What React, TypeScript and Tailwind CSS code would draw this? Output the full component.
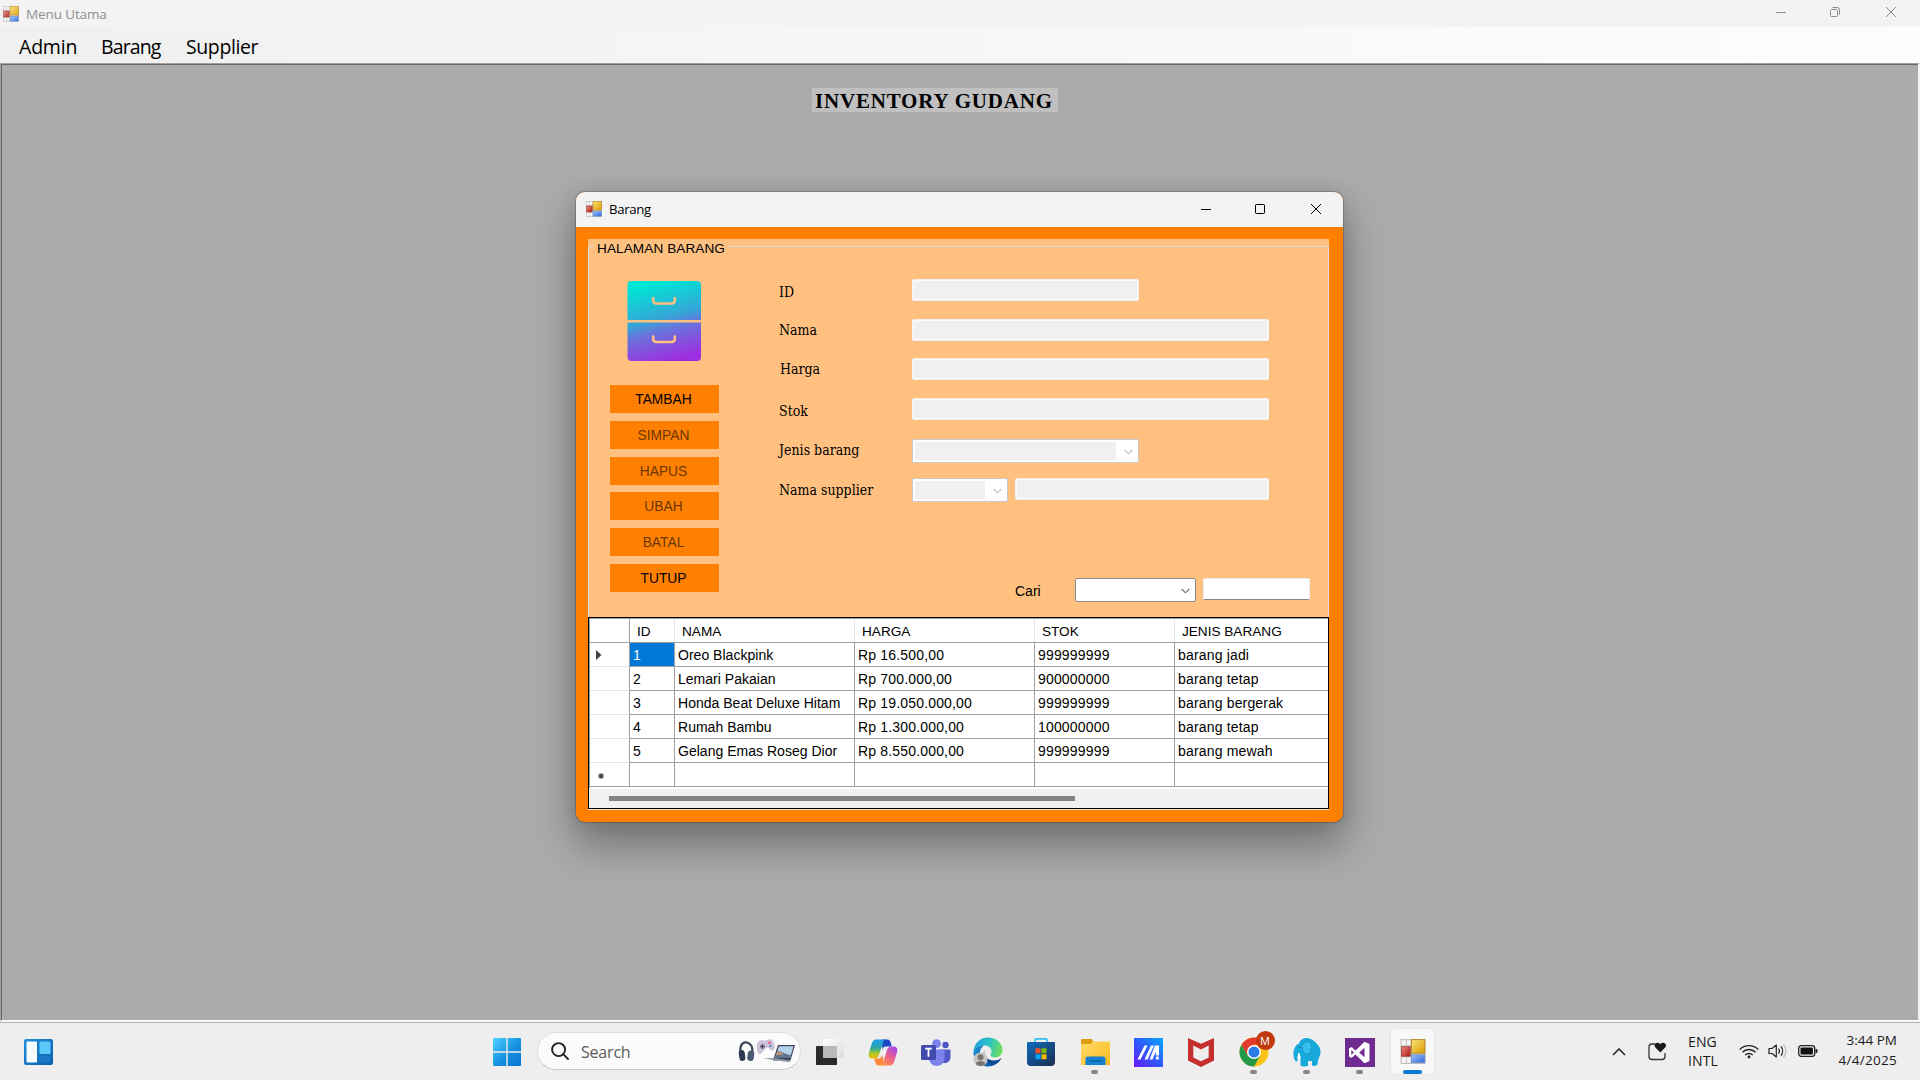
import React from "react";

const SEGOE = "font-['Open_Sans','Noto_Sans',sans-serif]";
const ARIAL = "font-['Liberation_Sans',Arial,sans-serif]";

function FormsIcon({ className, faded }: { className: string; faded?: boolean }) {
  return (
    <svg viewBox="0 0 16 16" className={className} opacity={faded ? 0.9 : 1}>
      <defs>
        <linearGradient id="fy" x1="0" y1="0" x2="1" y2="1">
          <stop offset="0" stopColor="#fbe27a" />
          <stop offset="1" stopColor="#dd9c00" />
        </linearGradient>
        <linearGradient id="fr" x1="0" y1="0" x2="1" y2="1">
          <stop offset="0" stopColor="#ee8a7c" />
          <stop offset="1" stopColor="#a81a12" />
        </linearGradient>
        <linearGradient id="fb" x1="0" y1="0" x2="1" y2="1">
          <stop offset="0" stopColor="#9cc2ff" />
          <stop offset="1" stopColor="#2f68d8" />
        </linearGradient>
      </defs>
      <rect width="16" height="16" fill="#c3c3c3" />
      <rect x=".8" y=".8" width="2.6" height="3.2" fill="#f6f6f6" />
      <rect x="4" y=".8" width="2.4" height="3.2" fill="#f6f6f6" />
      <rect x=".8" y="11.8" width="2.6" height="3.4" fill="#f6f6f6" />
      <rect x="4" y="11.8" width="2.4" height="3.4" fill="#f6f6f6" />
      <rect x="7" y=".4" width="8.6" height="8.6" fill="url(#fy)" stroke="#b98a1c" strokeWidth=".6" />
      <rect x=".6" y="5" width="5.6" height="6" fill="url(#fr)" stroke="#a33a30" strokeWidth=".5" />
      <rect x="7" y="10.2" width="8.6" height="5" fill="url(#fb)" stroke="#6d8fc9" strokeWidth=".5" />
    </svg>
  );
}

function CabinetIcon() {
  return (
    <svg viewBox="0 0 74 80" className="block h-[80px] w-[74px]">
      <defs>
        <linearGradient id="cab" gradientUnits="userSpaceOnUse" x1="28" y1="2" x2="48" y2="78">
          <stop offset="0" stopColor="#00e5d4" />
          <stop offset=".45" stopColor="#35a6d8" />
          <stop offset=".62" stopColor="#6a72dc" />
          <stop offset="1" stopColor="#9e2fe0" />
        </linearGradient>
      </defs>
      <path d="M0.500 39V4a4 4 0 0 1 4-4h65.500a4 4 0 0 1 4 4v35z" fill="url(#cab)" />
      <path d="M0.500 41.500H74V76a4 4 0 0 1-4 4H4.500a4 4 0 0 1-4-4z" fill="url(#cab)" />
      <path d="M26.200 17v2.500a3 3 0 0 0 3 3h15.600a3 3 0 0 0 3-3V17M26.200 55.500V58a3 3 0 0 0 3 3h15.600a3 3 0 0 0 3-3v-2.500" fill="none" stroke="#ffc080" strokeWidth="2.600" strokeLinecap="round" />
    </svg>
  );
}

function Chevron({ color }: { color: string }) {
  return (
    <svg viewBox="0 0 9 6" className="h-[6px] w-[9px]">
      <path d="M.7 1l3.800 3.800L8.300 1" fill="none" stroke={color} strokeWidth="1.100" />
    </svg>
  );
}

const DisabledInput = ({ className }: { className: string }) => (
  <div className={`h-[22px] rounded-[2px] border border-[#f2f0ee] bg-[#f0f0f0] shadow-[inset_0_0_0_1px_#fcfcfc] ${className}`} />
);

const DisabledCombo = ({ className }: { className: string }) => (
  <div className={`flex h-6 items-center rounded-[2px] border border-[#c8c8c8] bg-white pl-[2px] ${className}`}>
    <div className="h-[18px] flex-1 bg-[#f0f0f0]" />
    <div className="flex w-[22px] justify-center pl-[3px] pt-[1px]">
      <Chevron color="#bdbdbd" />
    </div>
  </div>
);

const buttons = [
  { t: "TAMBAH", on: true, mt: "" },
  { t: "SIMPAN", on: false, mt: "mt-2" },
  { t: "HAPUS", on: false, mt: "mt-2" },
  { t: "UBAH", on: false, mt: "mt-[7px]" },
  { t: "BATAL", on: false, mt: "mt-2" },
  { t: "TUTUP", on: true, mt: "mt-2" },
];

const fields: { label: string; h: string; pad: string; control: React.ReactNode }[] = [
  { label: "ID", h: "h-10", pad: "pt-[3px]", control: <DisabledInput className="w-[227px]" /> },
  { label: "Nama", h: "h-[39px]", pad: "pt-[1px]", control: <DisabledInput className="w-[357px]" /> },
  { label: "Harga", h: "h-10", pad: "pt-[1px] pl-px", control: <DisabledInput className="w-[357px]" /> },
  { label: "Stok", h: "h-[41px]", pad: "pt-[3px]", control: <DisabledInput className="w-[357px]" /> },
  { label: "Jenis barang", h: "h-[39px]", pad: "pt-[1px]", control: <DisabledCombo className="w-[227px]" /> },
  {
    label: "Nama supplier",
    h: "h-[24px]",
    pad: "pt-[2px]",
    control: (
      <div className="flex gap-[7px]">
        <DisabledCombo className="w-[96px]" />
        <DisabledInput className="w-[254px]" />
      </div>
    ),
  },
];

const rows = [
  ["1", "Oreo Blackpink", "Rp 16.500,00", "999999999", "barang jadi"],
  ["2", "Lemari Pakaian", "Rp 700.000,00", "900000000", "barang tetap"],
  ["3", "Honda Beat Deluxe Hitam", "Rp 19.050.000,00", "999999999", "barang bergerak"],
  ["4", "Rumah Bambu", "Rp 1.300.000,00", "100000000", "barang tetap"],
  ["5", "Gelang Emas Roseg Dior", "Rp 8.550.000,00", "999999999", "barang mewah"],
  ["", "", "", "", ""],
];

function DataGrid() {
  return (
    <div className="h-[192px] w-[741px] border border-black bg-white">
      <div className="h-[170px] border-l border-t border-[#a0a0a0]">
        <div className="grid h-6 grid-cols-[40px_45px_180px_180px_140px_1fr] border-b border-[#a0a0a0] text-[13.6px] leading-[21px]">
          <div className="border-r border-[#a0a0a0]" />
          {["ID", "NAMA", "HARGA", "STOK", "JENIS BARANG"].map((h, i) => (
            <div key={h} className={`pl-[7px] pt-[2px] ${i < 4 ? "border-r border-[#e5e5e5]" : ""}`}>
              {h}
            </div>
          ))}
        </div>
        {rows.map((r, i) => (
          <div key={i} className="grid h-6 grid-cols-[40px_45px_180px_180px_140px_1fr] text-[14px] leading-[21px]">
            <div className={`flex items-center border-r border-b border-r-[#a0a0a0] pl-[6px] ${i === 5 ? "border-b-[#a0a0a0]" : "border-b-[#e5e5e5]"}`}>
              {i === 0 && (
                <svg viewBox="0 0 6 10" className="h-[10px] w-[6px]">
                  <path d="M0 0l5.500 5L0 10z" fill="#404040" />
                </svg>
              )}
              {i === 5 && (
                <svg viewBox="0 0 6 6" className="ml-[2px] mt-[2px] h-[6px] w-[6px]">
                  <path d="M3 0v6M0 3h6M.8.8l4.400 4.400M5.200.8L.8 5.200" stroke="#404040" strokeWidth="1.100" />
                </svg>
              )}
            </div>
            {r.map((c, j) => (
              <div
                key={j}
                className={`border-b border-[#a0a0a0] pt-[2px] pl-[3px] whitespace-nowrap ${j > 1 ? "tracking-[0.17px]" : "tracking-[0.02px]"} ${j < 4 ? "border-r" : ""} ${i === 0 && j === 0 ? "bg-[#0078d7] text-white" : ""}`}
              >
                {c}
              </div>
            ))}
          </div>
        ))}
      </div>
      <div className="mt-[1px] flex h-[19px] items-center bg-[#f0f0f0] pl-[20px]">
        <div className="mt-[-1px] h-[5px] w-[466px] bg-[#858585]" />
      </div>
    </div>
  );
}

function BarangWindow() {
  return (
    <div className="absolute left-[576px] top-[192px] flex h-[630px] w-[767px] flex-col overflow-hidden rounded-[9px] bg-[#ff8000] shadow-[0_0_1px_1px_rgba(0,0,0,0.2),0_22px_40px_2px_rgba(0,0,0,0.32),0_0_20px_rgba(0,0,0,0.1)]">
      <div className="flex h-[35px] items-center bg-[#f3f3f3] pl-[10px]">
        <FormsIcon className="mt-[-1px] h-4 w-4" />
        <span className={`ml-[7px] flex-1 text-[13.2px] tracking-[-0.35px] ${SEGOE}`}>Barang</span>
        <svg viewBox="0 0 124 12" className="mr-[21px] mb-px h-3 w-[124px]" fill="none" stroke="#000">
          <path d="M3 6.500h10" />
          <rect x="57.500" y="1.500" width="9" height="9" rx=".8" />
          <path d="M113 1l10 10M123 1l-10 10" />
        </svg>
      </div>

      <div className={`mx-3 mt-3 flex h-[571px] w-[741px] flex-col bg-[#ffc080] text-black ${ARIAL}`}>
        <div className="flex h-[14px] items-start">
          <div className="mt-[7px] h-[7px] w-[6px] border-l border-t border-[#dcdcdc]" />
          <span className="px-[3px] text-[13.600px] leading-[19px] tracking-[0.08px]">HALAMAN BARANG</span>
          <div className="mt-[7px] h-[7px] flex-1 border-r border-t border-[#dcdcdc]" />
        </div>
        <div className="flex h-[364px] flex-col border-x border-[#dcdcdc]">
          <div className="flex h-[364px] pt-[26px]">
            <div className="w-[168px] pl-[21px]">
              <div className="ml-[17px] mt-[2px]">
                <CabinetIcon />
              </div>
              <div className="mt-[24px] w-[109px]">
                {buttons.map((b) => (
                  <div
                    key={b.t}
                    className={`flex h-7 items-center justify-center bg-[#ff8000] pr-[2px] pt-[2px] text-[13.800px] ${b.mt} ${b.on ? "text-black" : "text-[#6b3600]"}`}
                  >
                    {b.t}
                  </div>
                ))}
              </div>
            </div>
            <div className="flex flex-1 flex-col pl-[22px]">
              {fields.map((f) => (
                <div key={f.label} className={`flex shrink-0 ${f.h}`}>
                  <div className={`w-[133px] font-['DejaVu_Serif_Condensed','DejaVu_Serif',serif] text-[14px] leading-5 font-stretch-condensed ${f.pad}`}>{f.label}</div>
                  {f.control}
                </div>
              ))}
              <div className="mt-[76px] flex">
                <span className="ml-[236px] w-[60px] pt-[1px] text-[14px] leading-[24px]">Cari</span>
                <div className="flex h-6 w-[121px] items-center justify-end rounded-[2px] border border-[#8a8a8a] bg-white pr-[5px] pt-[1px]">
                  <Chevron color="#707070" />
                </div>
                <div className="ml-[7px] h-[22px] w-[107px] rounded-[2px] border border-[#ececec] border-b-[#868686] bg-white" />
              </div>
            </div>
          </div>
        </div>
        <DataGrid />
        <div className="h-px bg-[#f0e6dc]" />
      </div>
    </div>
  );
}

function AppCell({ children, dot }: { children: React.ReactNode; dot?: boolean }) {
  return (
    <div className="flex h-full w-[53px] flex-col items-center pt-[12px]">
      <div className="flex h-[34px] items-center">{children}</div>
      {dot && <div className="mt-[1px] h-[4px] w-[7px] rounded-full bg-[#858585]" />}
    </div>
  );
}

function Taskbar() {
  return (
    <div className={`flex h-[58px] border-t border-[#b4b4b4] bg-[#eeeeee] text-[#1a1a1a] ${SEGOE}`}>
      <div className="flex w-[493px] items-center pl-[24px]">
        <svg viewBox="0 0 29 26" className="h-[26px] w-[29px]">
          <defs>
            <linearGradient id="wg" x1="0" y1="0" x2="1" y2="1">
              <stop offset="0" stopColor="#1f8fdc" />
              <stop offset="1" stopColor="#0c5fae" />
            </linearGradient>
          </defs>
          <rect width="29" height="26" rx="2" fill="url(#wg)" />
          <rect x="2.500" y="2.500" width="10.500" height="21" rx=".8" fill="#f4fbff" />
          <rect x="15.500" y="2.500" width="11" height="12.500" rx=".8" fill="#5cc8f8" />
          <rect x="15.500" y="17" width="11" height="6.500" rx=".8" fill="#1b78c8" />
        </svg>
      </div>

      <svg viewBox="0 0 28 28" className="mt-[15px] h-7 w-7">
        <defs>
          <linearGradient id="win" x1="0" y1="0" x2="1" y2="1">
            <stop offset="0" stopColor="#4fd3ff" />
            <stop offset=".55" stopColor="#1590e0" />
            <stop offset="1" stopColor="#0a74d0" />
          </linearGradient>
        </defs>
        <path d="M1 0h12.300v13.300H0V1a1 1 0 0 1 1-1zM14.700 0H27a1 1 0 0 1 1 1v12.300H14.700zM0 14.700h13.300V28H1a1 1 0 0 1-1-1zM14.700 14.700H28V27a1 1 0 0 1-1 1H14.700z" fill="url(#win)" />
      </svg>

      <div className="ml-[16px] mt-[9px] flex h-[38px] w-[264px] items-center rounded-full border border-[#dedede] border-b-[#c6c6c6] bg-[#fbfbfb] pl-[13px]">
        <svg viewBox="0 0 18 18" className="h-[18px] w-[18px]" fill="none" stroke="#222" strokeWidth="1.900">
          <circle cx="7.600" cy="7.600" r="6.500" />
          <path d="M12.200 12.200l4.800 4.800" strokeLinecap="round" />
        </svg>
        <span className="ml-[12px] pt-[2px] text-[16px] tracking-[-0.2px] text-[#5c5c5c]">Search</span>
        <svg viewBox="0 0 57 26" className="ml-auto mr-[5px] h-[26px] w-[57px]">
          <path d="M2.500 14C1.500 7 5 3.500 9 4.500s5.500 4 5.500 9" fill="none" stroke="#3c475a" strokeWidth="2.200" />
          <rect x="1" y="12" width="6" height="11" rx="3" fill="#2f3b50" transform="rotate(-8 4 17)" />
          <rect x="9.500" y="12.500" width="6.500" height="10.500" rx="3.200" fill="#4a5a74" transform="rotate(8 13 18)" />
          <path d="M20.500 3c2.500-1.500 4.500 0 7-.6s5.500-2.600 7.500.6 2.500 8.500 0 9.500-3.500-3.200-6-2.700-3.500 5.200-7 6.200-4.500-11.500-1.500-13z" fill="#cfc3da" />
          <path d="M22 8.500h5M24.500 6v5" stroke="#4a4560" strokeWidth="1.500" />
          <circle cx="31.500" cy="4.800" r="1.200" fill="#e0566b" />
          <circle cx="32.500" cy="8" r="1.100" fill="#3a7fce" />
          <path d="M40 7h17l-4.500 15.500H35z" fill="#3b4357" />
          <path d="M41 8.300h14.500l-3.400 11.700H37z" fill="#b4d3ea" />
          <path d="M39.500 13.500c4-1 7 3.500 13.500 3.500l-.9 3H37z" fill="#5f7391" />
          <path d="M39.200 14c3-1 4.500 1.500 7 2.500l-8.500.8z" fill="#c98f74" />
          <path d="M25 20.500l11-.5 16.500 2.500-1 1.800z" fill="#8f95a8" />
        </svg>
      </div>

      <div className="ml-[2px] flex">
        <AppCell>
          <svg viewBox="0 0 28 28" className="h-7 w-7">
            <defs>
              <linearGradient id="tv" x1="0" y1="0" x2="1" y2="1">
                <stop offset="0" stopColor="#ffffff" />
                <stop offset="1" stopColor="#dcdcdc" />
              </linearGradient>
            </defs>
            <rect y="8" width="21" height="19" rx=".8" fill="#2a2a2a" />
            <rect x="7" y="1" width="21" height="19" rx=".8" fill="url(#tv)" />
            <path d="M7 8h14v12H7z" fill="#b9b9b9" />
          </svg>
        </AppCell>
        <AppCell>
          <svg viewBox="0 0 30 27" className="h-[27px] w-[30px]">
            <defs>
              <linearGradient id="cp1" x1="0" y1="0" x2="0" y2="1">
                <stop offset="0" stopColor="#1d9bf0" />
                <stop offset=".45" stopColor="#2aa7a0" />
                <stop offset=".75" stopColor="#b5c823" />
                <stop offset="1" stopColor="#f5b800" />
              </linearGradient>
              <linearGradient id="cp2" x1=".8" y1="0" x2=".2" y2="1">
                <stop offset="0" stopColor="#a24be8" />
                <stop offset=".5" stopColor="#ee5f8f" />
                <stop offset="1" stopColor="#ff9a4a" />
              </linearGradient>
            </defs>
            <path d="M14 .5h5.500c2 0 2.700 1.500 3.300 3.500l1 3.500h-6c-2 0-3 1.500-3.500 3.500z" fill="#1d46c4" />
            <path d="M8 .5h10c-1.800 0-2.600 1.700-3.200 3.500L11 16c-.8 2.300-2 3.500-4 3.500H4.500C1 19.500 0 17 1 13.500l2.800-9C4.600 2 6 .5 8 .5z" fill="url(#cp1)" />
            <path d="M16 26.500H10.500c-2 0-2.700-1.500-3.300-3.500l-1-3.500h4c2 0 3.800-1.500 4.500-3.500z" fill="#ff8a3c" />
            <path d="M22 26.500H12c1.800 0 2.600-1.700 3.200-3.500L19 11c.8-2.300 2-3.500 4-3.500h2.500C29 7.500 30 10 29 13.500l-2.800 9c-.8 2.500-2.200 4-4.200 4z" fill="url(#cp2)" />
          </svg>
        </AppCell>
        <AppCell>
          <svg viewBox="0 0 30 27" className="h-[27px] w-[30px]">
            <circle cx="24.500" cy="6" r="3.200" fill="#5058c8" />
            <path d="M19 10.500h9.500a1 1 0 0 1 1 1V18c0 3.500-2.500 6-5.500 6s-5-2-5-5z" fill="#5058c8" />
            <circle cx="15.500" cy="4.700" r="4.400" fill="#7b83eb" />
            <path d="M8 10.500h14.500a1 1 0 0 1 1 1V19c0 4.500-3.300 8-7.700 8S8 23.500 8 19z" fill="#7b83eb" />
            <rect y="6" width="15" height="15" rx="1.500" fill="#444bb0" />
            <path d="M4.200 9.700h6.600M7.500 9.700v8" stroke="#fff" strokeWidth="1.800" />
          </svg>
        </AppCell>
        <AppCell>
          <svg viewBox="0 0 30 30" className="mr-px h-[30px] w-[30px]">
            <defs>
              <linearGradient id="ed1" x1="0" y1=".3" x2="1" y2=".5">
                <stop offset="0" stopColor="#1fa3dc" />
                <stop offset=".5" stopColor="#2bc0c8" />
                <stop offset="1" stopColor="#6de05a" />
              </linearGradient>
              <linearGradient id="ed2" x1="0" y1="0" x2="1" y2="1">
                <stop offset="0" stopColor="#1b8fd6" />
                <stop offset="1" stopColor="#0b4f9c" />
              </linearGradient>
            </defs>
            <path d="M.5 14.500C1 6.500 7 .5 15 .5s14.500 5.500 14.500 12.500c0 4.500-3.500 7.500-7.500 7.500-3 0-4.500-1-4.500-2.500 0-1 1-1.500 1-4 0-3-3-5.500-7-5.500C6.500 8.500 2 11 .5 14.500z" fill="url(#ed1)" />
            <path d="M.5 15C1.500 11 6 8.500 11 8.500c-3 2-4.500 5-4 8.500 1 6.500 7 9.500 13 8.500 3-.5 5.500-2 7.500-4C25 26.500 20.500 29.500 15 29.500 7 29.500 0 23 .5 15z" fill="url(#ed2)" />
            <path d="M11.500 13c-1.500 5 2 10.500 9.500 10.500 3 0 5.500-.8 7.500-2.500C26 26.500 22 28 18 27 12 25.500 9 18 11.500 13z" fill="#0d4a94" />
            <circle cx="7.500" cy="22.500" r="7" fill="#c9c5c2" />
            <circle cx="7.500" cy="20.300" r="3" fill="#7a7572" />
            <path d="M2.800 27.200a4.800 4 0 0 1 9.400 0 7 7 0 0 1-9.400 0z" fill="#7a7572" />
          </svg>
        </AppCell>
        <AppCell>
          <svg viewBox="0 0 28 28" className="mr-px h-7 w-7">
            <defs>
              <linearGradient id="st" x1="0" y1="0" x2="1" y2="1">
                <stop offset="0" stopColor="#0f6cbd" />
                <stop offset="1" stopColor="#1b2c52" />
              </linearGradient>
            </defs>
            <path d="M8 5V2a1.200 1.200 0 0 1 1.200-1.200h9.600A1.200 1.200 0 0 1 20 2v3" fill="none" stroke="#2fc0f4" strokeWidth="1.700" />
            <path d="M0 5a1 1 0 0 1 1-1h26a1 1 0 0 1 1 1v19a4 4 0 0 1-4 4H4a4 4 0 0 1-4-4z" fill="url(#st)" />
            <path d="M8.500 10.300h5v5h-5z" fill="#f25022" />
            <path d="M14.500 10.300h5v5h-5z" fill="#7fba00" />
            <path d="M8.500 16.300h5v5h-5z" fill="#00a4ef" />
            <path d="M14.500 16.300h5v5h-5z" fill="#ffb900" />
          </svg>
        </AppCell>
        <AppCell dot>
          <svg viewBox="0 0 29 28" className="ml-px h-7 w-[29px]">
            <defs>
              <linearGradient id="fe" x1="0" y1="0" x2="1" y2="1">
                <stop offset="0" stopColor="#ffdc6b" />
                <stop offset="1" stopColor="#fbb91c" />
              </linearGradient>
            </defs>
            <path d="M0 2a1 1 0 0 1 1-1h9.500l2 2.500-2 3.500H0z" fill="#dd9a0a" />
            <path d="M0 6h9.500L12 3.500h16a1 1 0 0 1 1 1V27H0z" fill="url(#fe)" />
            <path d="M4.500 27v-6a2.500 2.500 0 0 1 2.500-2.500h15a2.500 2.500 0 0 1 2.500 2.500v6z" fill="#1480cf" />
            <path d="M9 23h11.500" stroke="#0a5496" strokeWidth="1.200" strokeLinecap="round" />
          </svg>
        </AppCell>
        <AppCell>
          <svg viewBox="0 0 29 29" className="ml-px h-[29px] w-[29px]">
            <defs>
              <linearGradient id="ma" x1="0" y1="1" x2="1" y2="0">
                <stop offset="0" stopColor="#6a17f5" />
                <stop offset=".5" stopColor="#2f5bfb" />
                <stop offset="1" stopColor="#06a6ff" />
              </linearGradient>
            </defs>
            <rect width="29" height="29" fill="url(#ma)" />
            <path d="M3.500 21.500L10.500 7.500h3l-7 14zM10.500 21.500l6.500-14h3l-6.500 14z" fill="#fff" />
            <path d="M21 7.500h4v10h-3.200v-4l-3.300 8h-3z" fill="#fff" />
            <circle cx="23.300" cy="20" r="1.700" fill="#fff" />
          </svg>
        </AppCell>
        <AppCell>
          <svg viewBox="0 0 26 29" className="h-[29px] w-[26px]">
            <path d="M0 0l13 5.800L26 0v22.500L13 29 0 22.500zM5.300 7.500v12L13 23.300l7.700-3.800v-12L13 11.500z" fill="#c5302e" fillRule="evenodd" />
          </svg>
        </AppCell>
        <AppCell dot>
          <div className="relative">
            <svg viewBox="0 0 30 30" className="h-[30px] w-[30px]">
              <circle cx="15" cy="15" r="14.500" fill="#fbc116" />
              <path d="M2.500 7.700A14.500 14.500 0 0 1 27.600 7.700H15l-6.300 11z" fill="#e33b2e" />
              <path d="M2.500 7.700L8.700 18.700l12.500 0-6.200 10.800A14.500 14.500 0 0 1 2.500 7.700z" fill="#249a49" />
              <circle cx="15" cy="15" r="7" fill="#fff" />
              <circle cx="15" cy="15" r="5.500" fill="#2b7de9" />
            </svg>
            <div className="absolute left-[17px] top-[-6px] flex h-[19px] w-[19px] items-center justify-center rounded-full bg-[#c0390f] text-[11px] leading-none text-white">M</div>
          </div>
        </AppCell>
        <AppCell dot>
          <svg viewBox="0 0 28 30" className="h-[30px] w-[28px]">
            <path d="M14 1C9 1 7 3.500 6 6.500 2 8 0 13 .5 18c.3 3.500 1.500 6.500 3 6.500s1-2 .8-4.500l1.200-3 2 2.500v9c2 1.200 5 1 7.500.5v-5h4v4.500c2 1 4.500.3 5.500-1 .5-3 .5-5 2-8 1.500-3.500 1.500-7-.5-10-3-4.500-8-8.500-12-8.500z" fill="#17a9dc" />
            <path d="M10 7c3-3.500 8-3 8.500 2s-2.500 9-5.500 8c-3.500-1-5-6.500-3-10z" fill="#34bfec" stroke="#0f8fc0" strokeWidth=".7" />
            <path d="M5 16c-.5 2.500.3 4.500 2.500 5l-.8-4.500z" fill="#fff" />
            <circle cx="6.800" cy="10.500" r=".8" fill="#0b5f86" />
          </svg>
        </AppCell>
        <AppCell dot>
          <svg viewBox="0 0 30 29" className="h-[29px] w-[30px]">
            <rect width="30" height="29" fill="#6f2b90" />
            <path d="M19.500 3.800l5 2.300v16.800l-5 2.300-9-8.600-4 3.300L4 18.600v-8.200l2.500-1.300 4 3.300zM19.500 9.800l-5.300 4.700 5.300 4.700zM6.300 12v5l2.600-2.500z" fill="#fff" fillRule="evenodd" />
          </svg>
        </AppCell>
        <div className="ml-[4px] mt-[5px] flex h-[47px] w-[45px] flex-col items-center rounded-[6px] border border-[#e6e6e6] bg-[#f8f8f8] pt-[10px]">
          <FormsIcon className="h-[25px] w-[26px]" />
          <div className="mt-[6px] h-[4px] w-[19px] rounded-full bg-[#0c78d3]" />
        </div>
      </div>

      <div className="ml-auto flex items-center pr-[23px] text-[13.5px] leading-[19px]">
        <svg viewBox="0 0 14 8" className="h-2 w-[14px]" fill="none" stroke="#222" strokeWidth="1.500">
          <path d="M1 7l6-6 6 6" />
        </svg>
        <svg viewBox="0 0 19 19" className="mb-px ml-[22px] h-[19px] w-[19px]">
          <path d="M7 2H4a3 3 0 0 0-3 3v9.500a3 3 0 0 0 3 3h10a3 3 0 0 0 3-3V11" fill="none" stroke="#333" strokeWidth="1.300" />
          <path d="M12.300 10.500L7.200 5.300C5.500 3 7.500.3 10 .7c1 .2 1.800.8 2.300 1.600.5-.8 1.300-1.400 2.300-1.600 2.500-.4 4.500 2.300 2.800 4.600z" fill="#1a1a1a" />
        </svg>
        <div className="mb-[2px] ml-[21px] w-[51px] text-[14px] tracking-[0.1px]">
          <div>ENG</div>
          <div>INTL</div>
        </div>
        <svg viewBox="0 0 20 15" className="mb-px h-[15px] w-[20px]" fill="none" stroke="#222" strokeWidth="1.300">
          <path d="M.7 5.500a13 13 0 0 1 18.600 0M3.400 8.300a9.200 9.200 0 0 1 13.200 0M6.200 11.100a5.300 5.300 0 0 1 7.600 0" />
          <circle cx="10" cy="13" r="1.400" fill="#222" stroke="none" />
        </svg>
        <svg viewBox="0 0 20 16" className="mb-px ml-[9px] h-4 w-5" fill="none" stroke="#222" strokeWidth="1.200">
          <path d="M1 5.500h3L8.300 2v12L4 10.500H1z" strokeLinejoin="round" />
          <path d="M10.500 5.500a4 4 0 0 1 0 5M13 3.500a7 7 0 0 1 0 9" />
          <path d="M15.500 1.500a10 10 0 0 1 0 13" stroke="#bbb" />
        </svg>
        <svg viewBox="0 0 20 12" className="mb-px ml-[10px] h-3 w-5">
          <rect x=".7" y=".7" width="16" height="10.600" rx="2.500" fill="none" stroke="#222" strokeWidth="1.300" />
          <rect x="2.500" y="2.500" width="12.400" height="7" rx="1" fill="#111" />
          <path d="M17.500 4h.8a1.200 1.200 0 0 1 1.200 1.200v1.600A1.200 1.200 0 0 1 18.300 8h-.8z" fill="#222" />
        </svg>
        <div className="mb-[3px] ml-[14px] w-[65px] text-right leading-[20px] whitespace-nowrap">
          <div>3:44 PM</div>
          <div className="tracking-[0.3px]">4/4/2025</div>
        </div>
      </div>
    </div>
  );
}

export default function App() {
  return (
    <div className="flex h-[1080px] w-[1920px] flex-col overflow-hidden bg-[#f3f3f3]">
      <div className={`flex h-[27px] items-center pl-[3px] ${SEGOE}`}>
        <FormsIcon className="h-4 w-4" faded />
        <span className="ml-[7px] flex-1 pt-px text-[13.5px] tracking-[-0.12px] text-[#8f8f8f]">Menu Utama</span>
        <svg viewBox="0 0 122 12" className="mb-[3px] mr-[23px] h-3 w-[122px]" fill="none" stroke="#8c8c8c">
          <path d="M1 6.500h10" />
          <rect x="55.500" y="3.500" width="7" height="7" rx="1" />
          <path d="M57.500 1.500h5a2 2 0 0 1 2 2v5" />
          <path d="M111 1l10 10M121 1l-10 10" />
        </svg>
      </div>
      <div className={`flex h-9 items-center gap-[25px] bg-linear-to-r from-[#f0f0f0] to-[#fdfdfd] pt-[3px] pl-[19px] text-[19.500px] text-black ${SEGOE}`}>
        <span className="w-[57px] tracking-[-0.2px]">Admin</span>
        <span className="w-[60px] tracking-[-0.9px]">Barang</span>
        <span className="tracking-[-0.4px]">Supplier</span>
      </div>
      <div className="flex-1 border-t border-l border-r-2 border-b-2 border-[#a0a0a0] border-r-[#f4f4f4] border-b-[#f8f8f8]">
        <div className="flex h-full justify-center border-t border-l border-[#696969] bg-[#ababab] pt-[23px] pr-[50px]">
          <div className="flex h-6 w-[246px] items-center bg-[#c0c0c0] pt-px pl-[3px] font-['Liberation_Serif',serif] text-[21px] leading-[24px] font-bold tracking-[0.8px] whitespace-nowrap text-black">
            INVENTORY GUDANG
          </div>
        </div>
      </div>
      <Taskbar />
      <BarangWindow />
    </div>
  );
}
